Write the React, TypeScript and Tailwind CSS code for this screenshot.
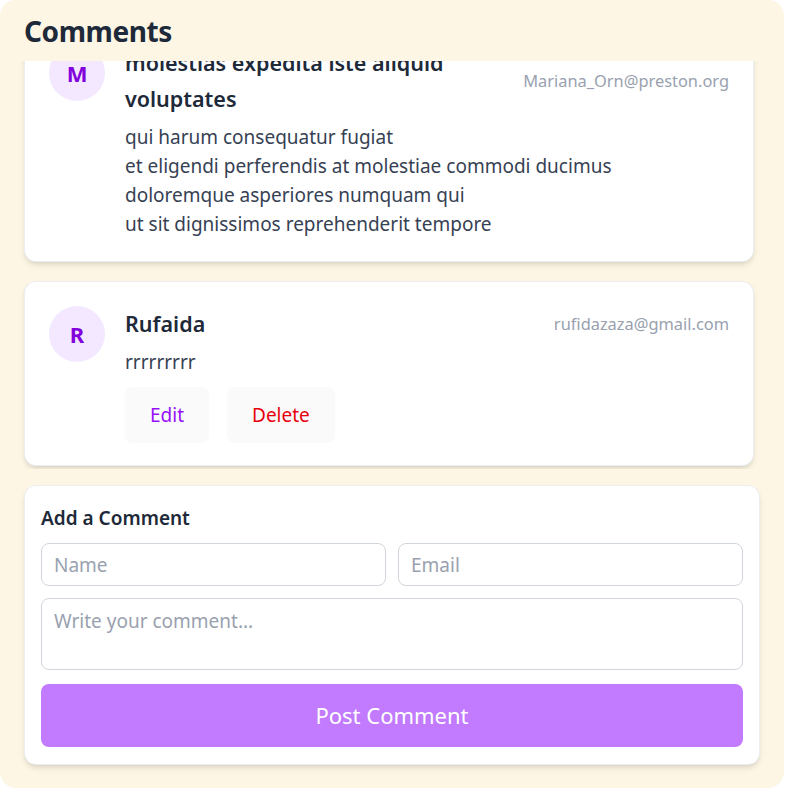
import React from "react";

type Comment = {
  id: number;
  name: string;
  email: string;
  body: string;
  mine?: boolean;
};

const comments: Comment[] = [
  {
    id: 1,
    name: "molestias expedita iste aliquid voluptates",
    email: "Mariana_Orn@preston.org",
    body: "qui harum consequatur fugiat\net eligendi perferendis at molestiae commodi ducimus\ndoloremque asperiores numquam qui\nut sit dignissimos reprehenderit tempore",
  },
  {
    id: 2,
    name: "Rufaida",
    email: "rufidazaza@gmail.com",
    body: "rrrrrrrrr",
    mine: true,
  },
];

const CommentCard = ({ c, first }: { c: Comment; first?: boolean }) => {
  return (
    <div
      className={`flex gap-5 bg-white border border-gray-200/70 rounded-xl shadow-md px-6 pt-6 pb-[22px] ${
        first ? "-mt-[41px]" : ""
      }`}
    >
      <div className="w-14 h-14 shrink-0 rounded-full bg-purple-100 text-[#8200db] font-bold text-[22px] flex items-center justify-center">
        {c.name.charAt(0).toUpperCase()}
      </div>
      <div className="flex-1 min-w-0">
        <div className="flex items-center justify-between gap-6">
          <h3 className="text-[21.5px] leading-9 font-semibold text-gray-800">{c.name}</h3>
          <span className="text-[16.4px] text-gray-400 shrink-0">{c.email}</span>
        </div>
        <p className="mt-1.5 text-[19px] leading-[29px] text-gray-700 whitespace-pre-line">
          {c.body}
        </p>
        {c.mine && (
          <div className="flex gap-[18px] mt-2.5">
            <button className="h-14 px-[25px] rounded-lg bg-neutral-50 text-[19px] text-purple-600">
              Edit
            </button>
            <button className="h-14 px-[25px] rounded-lg bg-neutral-50 text-[19px] text-red-600">
              Delete
            </button>
          </div>
        )}
      </div>
    </div>
  );
};

export default function App() {
  return (
    <div
      className="w-[784px] h-[788px] bg-[#fdf6e4] rounded-2xl flex flex-col overflow-hidden"
      style={{ fontFamily: '"Noto Sans", "Open Sans", sans-serif' }}
    >
      <div className="h-[61px] shrink-0 px-6 flex items-center relative z-10 bg-[#fdf6e4]">
        <h2 className="text-[28px] tracking-[-0.4px] font-bold text-gray-800">Comments</h2>
      </div>
      <div className="h-[408px] shrink-0 overflow-hidden pl-6 pr-[30px] flex flex-col gap-[19px]">
        {comments.map((c, i) => (
          <CommentCard key={c.id} c={c} first={i === 0} />
        ))}
      </div>
      <div className="mx-6 mt-4 bg-white border border-gray-200/70 rounded-xl shadow-md px-4 pt-4 pb-[17px]">
        <h4 className="text-[19px] leading-8 font-semibold text-gray-800 mb-[9px]">
          Add a Comment
        </h4>
        <div className="grid grid-cols-2 gap-3">
          <input
            placeholder="Name"
            className="h-[43px] px-3 border border-gray-300 rounded-lg text-[19px] placeholder:text-gray-400 outline-none"
          />
          <input
            placeholder="Email"
            className="h-[43px] px-3 border border-gray-300 rounded-lg text-[19px] placeholder:text-gray-400 outline-none"
          />
        </div>
        <textarea
          placeholder="Write your comment..."
          className="mt-3 block w-full h-[72px] px-3 py-2 border border-gray-300 rounded-lg text-[19px] resize-none placeholder:text-gray-400 outline-none"
        />
        <button className="mt-3.5 w-full h-[63px] rounded-lg bg-purple-400 text-white text-[22px]">
          Post Comment
        </button>
      </div>
    </div>
  );
}
